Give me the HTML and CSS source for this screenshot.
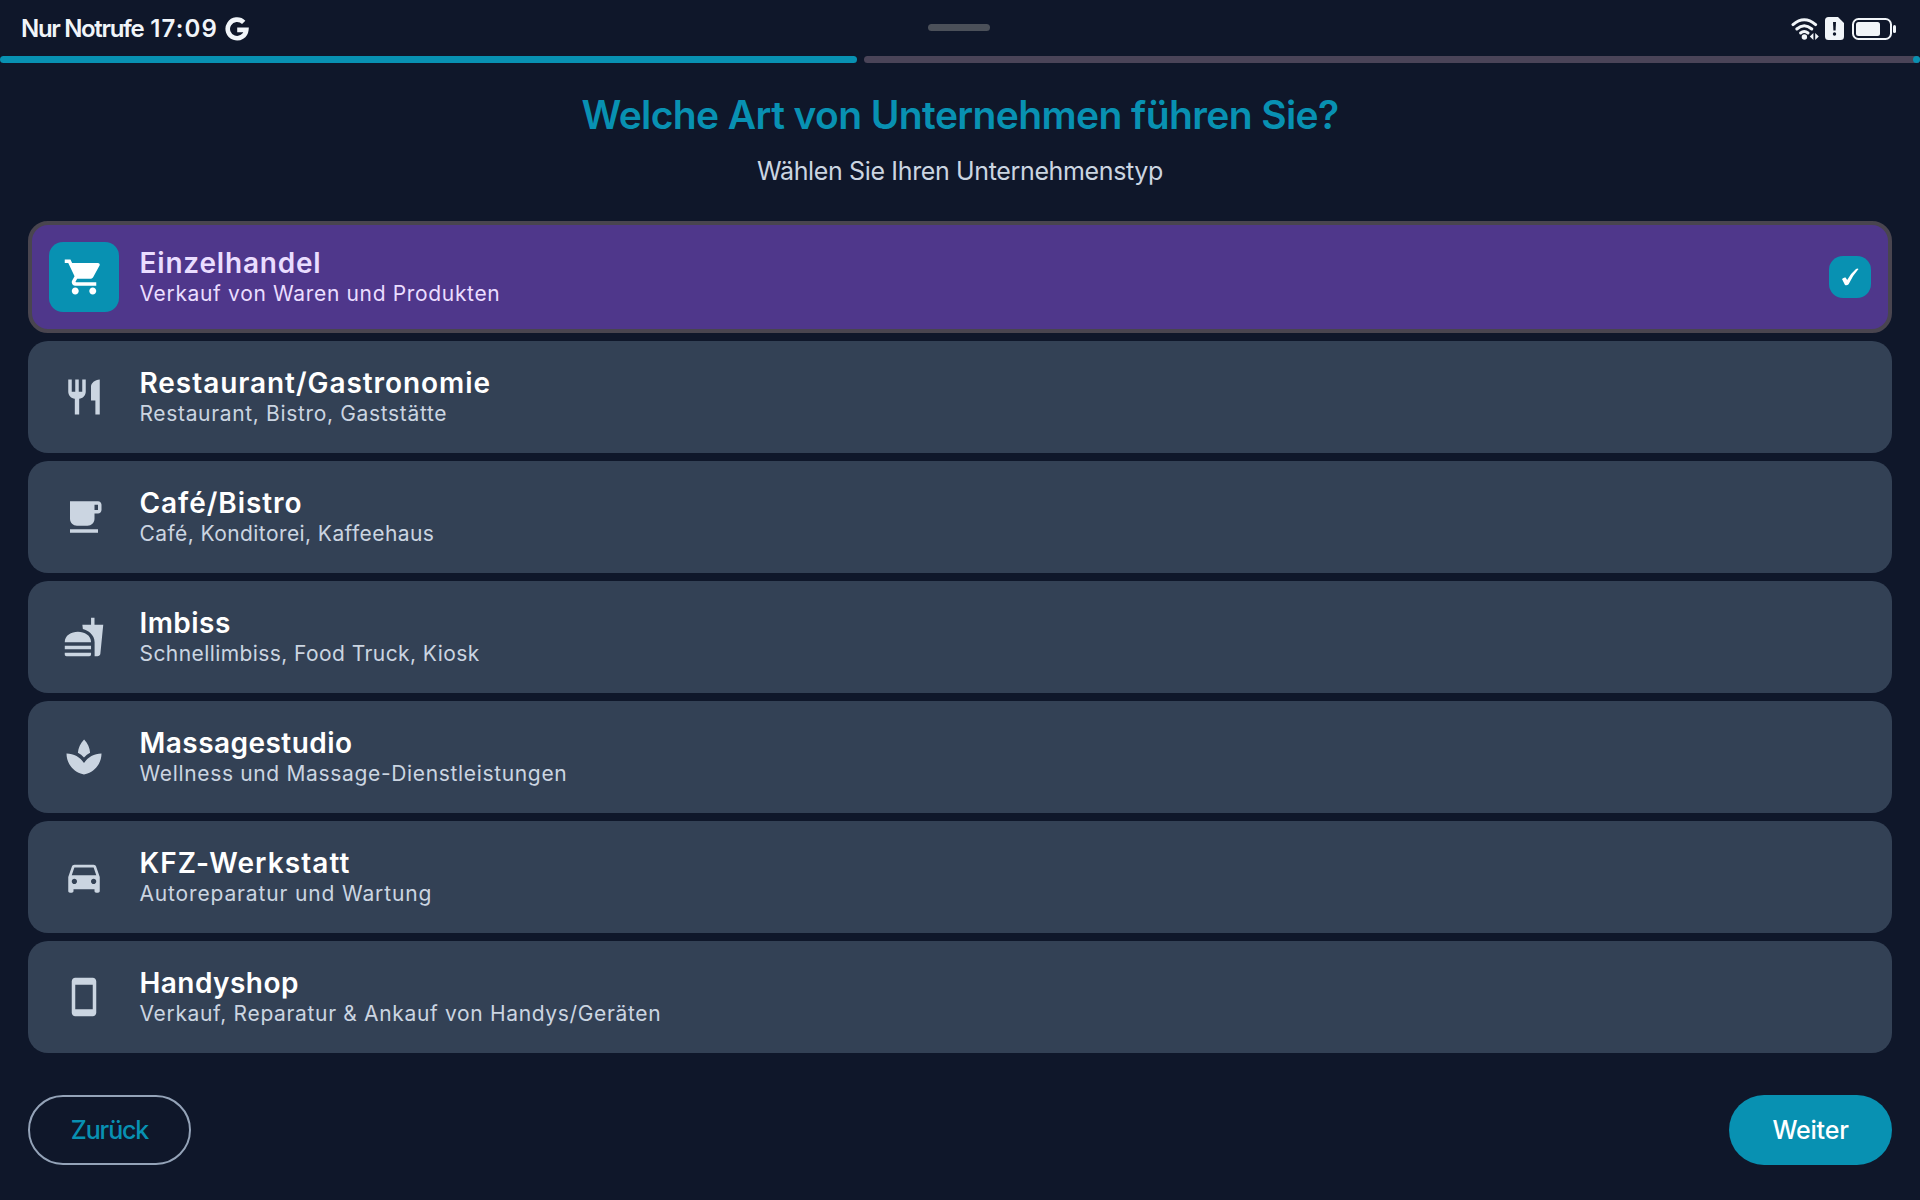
FILE: index.html
```
<!DOCTYPE html>
<html lang="de">
<head>
    <meta charset="UTF-8">
    <title>Unternehmenstyp</title>
    <link rel="stylesheet" href="styles.css">
</head>
<body>
<!-- Status bar -->
<div class="status-bar">
    <div class="status-left">
        <span class="carrier">Nur Notrufe</span>
        <span class="clock">17:09</span>
        <svg class="google-icon" viewBox="0 0 24 24"><path d="M18.7 5.4A9.3 9.3 0 1 0 21.3 12.9H12.2" fill="none" stroke="#f1f5f9" stroke-width="4.6"/></svg>
    </div>
    <div class="handle"></div>
    <div class="status-right">
        <svg class="wifi-icon" viewBox="0 0 28 22">
            <g fill="none" stroke="#f1f5f9" stroke-width="3" stroke-linecap="round">
                <path d="M2 6.6Q13.2-3.2 24.6 6.6"/>
                <path d="M5.8 11Q13.2 4.6 20.8 11"/>
                <path d="M9.6 15Q13.2 12 17 15"/>
            </g>
            <circle cx="13.4" cy="19" r="2.7" fill="#f1f5f9"/>
            <path d="M22.4 15v7l-3.6-3.5zM24.2 15v7l3.6-3.500z" fill="#f1f5f9"/>
        </svg>
        <svg class="sim-icon" viewBox="0 0 19 23">
            <path d="M3.5 0H13l6 6v13.5a3.5 3.5 0 0 1-3.5 3.5h-12A3.5 3.5 0 0 1 0 19.5v-16A3.5 3.5 0 0 1 3.5 0z" fill="#f1f5f9"/>
            <path d="M8 5h3l-.4 8.500H8.4z" fill="#0f172a"/>
            <circle cx="9.5" cy="17" r="1.7" fill="#0f172a"/>
        </svg>
        <svg class="battery-icon" viewBox="0 0 44 22">
            <rect x="1" y="1" width="38" height="20" rx="5.5" fill="none" stroke="#f1f5f9" stroke-width="2"/>
            <rect x="4" y="4" width="24" height="14" rx="2.5" fill="#f1f5f9"/>
            <rect x="41" y="7" width="3" height="8" rx="1.5" fill="#f1f5f9"/>
        </svg>
    </div>
</div>

<!-- Setup progress -->
<div class="progress">
    <div class="progress-done"></div>
    <div class="progress-rest"><span class="progress-stop"></span></div>
</div>

<div class="header">
    <h1 class="title">Welche Art von Unternehmen führen Sie?</h1>
    <p class="subtitle">Wählen Sie Ihren Unternehmenstyp</p>
</div>

<!-- Business types -->
<div class="card-list">
    <div class="card retail selected">
        <div class="card-icon"><svg viewBox="0 0 24 24"><path d="M7 18c-1.1 0-1.99.9-1.99 2S5.9 22 7 22s2-.9 2-2-.9-2-2-2zM1 2v2h2l3.6 7.59-1.35 2.45c-.16.28-.25.61-.25.96 0 1.1.9 2 2 2h12v-2H7.42c-.14 0-.25-.11-.25-.25l.03-.12.9-1.63h7.45c.75 0 1.41-.41 1.75-1.03l3.58-6.49c.08-.14.12-.31.12-.48 0-.55-.45-1-1-1H5.21l-.94-2H1zm16 16c-1.1 0-1.99.9-1.99 2s.89 2 1.99 2 2-.9 2-2-.9-2-2-2z"/></svg></div>
        <div class="card-text">
            <div class="card-name">Einzelhandel</div>
            <div class="card-desc">Verkauf von Waren und Produkten</div>
        </div>
        <div class="check"><svg viewBox="0 0 18 18"><path d="M1 11Q3 9 4.6 9.600L6.200 12.100Q10 5 15 1Q16.600.1 17.500.9Q11.500 7.500 7.600 16.200Q5.900 18 4 17Z" fill="#fff"/></svg></div>
    </div>
    <div class="card restaurant">
        <div class="card-icon"><svg viewBox="0 0 24 24"><path d="M11 9H9V2H7v7H5V2H3v7c0 2.12 1.66 3.84 3.75 3.97V22h2.5v-9.03C11.34 12.84 13 11.12 13 9V2h-2v7zm5-3v8h2.5v8H21V2c-2.76 0-5 2.24-5 4z"/></svg></div>
        <div class="card-text">
            <div class="card-name">Restaurant/Gastronomie</div>
            <div class="card-desc">Restaurant, Bistro, Gaststätte</div>
        </div>
    </div>
    <div class="card cafe">
        <div class="card-icon"><svg viewBox="0 0 24 24"><path d="M20 3H4v10c0 2.21 1.79 4 4 4h6c2.21 0 4-1.79 4-4v-3h2c1.11 0 2-.9 2-2V5c0-1.11-.89-2-2-2zm0 5h-2V5h2v3zM4 19h16v2H4z"/></svg></div>
        <div class="card-text">
            <div class="card-name">Café/Bistro</div>
            <div class="card-desc">Café, Konditorei, Kaffeehaus</div>
        </div>
    </div>
    <div class="card snack">
        <div class="card-icon"><svg viewBox="0 0 24 24"><path d="M18.06 22.99h1.66c.84 0 1.53-.64 1.63-1.46L23 5.05h-5V1h-1.97v4.05h-4.97l.3 2.34c1.71.47 3.31 1.32 4.27 2.26 1.44 1.42 2.43 2.89 2.43 5.29v8.05zM1 21.99V21h15.03v.99c0 .55-.45 1-1.01 1H2.01c-.56 0-1.01-.45-1.01-1zm15.03-7c0-8-15.03-8-15.03 0h15.03zM1.02 17h15v2h-15z"/></svg></div>
        <div class="card-text">
            <div class="card-name">Imbiss</div>
            <div class="card-desc">Schnellimbiss, Food Truck, Kiosk</div>
        </div>
    </div>
    <div class="card massage">
        <div class="card-icon"><svg viewBox="0 0 24 24"><path d="M15.49 9.63c-.18-2.79-1.31-5.51-3.43-7.63-2.14 2.14-3.32 4.86-3.55 7.63 1.28.68 2.46 1.56 3.49 2.63 1.03-1.06 2.21-1.94 3.49-2.63zM12 15.45C9.85 12.17 6.18 10 2 10c0 5.32 3.36 9.82 8.03 11.49.63.23 1.29.4 1.97.51.68-.12 1.33-.29 1.97-.51C18.64 19.82 22 15.32 22 10c-4.18 0-7.85 2.17-10 5.45z"/></svg></div>
        <div class="card-text">
            <div class="card-name">Massagestudio</div>
            <div class="card-desc">Wellness und Massage-Dienstleistungen</div>
        </div>
    </div>
    <div class="card garage">
        <div class="card-icon"><svg viewBox="0 0 24 24"><path d="M18.92 6.01C18.72 5.42 18.16 5 17.5 5h-11c-.66 0-1.21.42-1.42 1.01L3 12v8c0 .55.45 1 1 1h1c.55 0 1-.45 1-1v-1h12v1c0 .55.45 1 1 1h1c.55 0 1-.45 1-1v-8l-2.08-5.99zM6.5 16c-.83 0-1.5-.67-1.5-1.5S5.67 13 6.5 13s1.5.67 1.5 1.5S7.33 16 6.5 16zm11 0c-.83 0-1.5-.67-1.5-1.5s.67-1.5 1.5-1.5 1.5.67 1.5 1.5-.67 1.5-1.5 1.5zM5 11l1.5-4.5h11L19 11H5z"/></svg></div>
        <div class="card-text">
            <div class="card-name">KFZ-Werkstatt</div>
            <div class="card-desc">Autoreparatur und Wartung</div>
        </div>
    </div>
    <div class="card phone">
        <div class="card-icon"><svg viewBox="0 0 24 24"><path d="M17 1.01L7 1c-1.1 0-2 .9-2 2v18c0 1.1.9 2 2 2h10c1.1 0 2-.9 2-2V3c0-1.1-.9-1.99-2-1.99zM17 19H7V5h10v14z"/></svg></div>
        <div class="card-text">
            <div class="card-name">Handyshop</div>
            <div class="card-desc">Verkauf, Reparatur &amp; Ankauf von Handys/Geräten</div>
        </div>
    </div>
</div>

<!-- Navigation -->
<div class="footer">
    <button class="button back-button" type="button">Zurück</button>
    <button class="button next-button" type="button">Weiter</button>
</div>
</body>
</html>
```
FILE: styles.css
```
/* Body styling */
body {
    font-family: Inter, "Noto Sans", sans-serif;
    background-color: #0f172a;
    color: #fff;
    width: 1920px;
    height: 1200px;
    margin: 0;
    overflow: hidden;
}

svg {
    display: block;
}

/* Status bar */
.status-bar {
    display: grid;
    grid-template-columns: 1fr 62px 1fr;
    align-items: center;
    height: 56px;
    padding: 0 24px 0 21px;
    color: #f1f5f9;
    font-size: 24px;
    font-weight: 600;
    box-sizing: border-box;
}

.status-left,
.status-right {
    display: flex;
    align-items: center;
    padding-top: 1px;
}

.status-right {
    justify-content: flex-end;
}

.carrier {
    letter-spacing: -1.33px;
}

.clock {
    margin-left: 7px;
    letter-spacing: 1.1px;
}

.google-icon {
    width: 24px;
    height: 24px;
    margin-left: 7px;
}

.handle {
    height: 7px;
    margin-bottom: 1px;
    border-radius: 4px;
    background-color: #4b5059;
}

.wifi-icon {
    width: 28px;
    height: 22px;
}

.sim-icon {
    width: 19px;
    height: 23px;
    margin: 0 8px 0 6px;
}

.battery-icon {
    width: 44px;
    height: 22px;
}

/* Progress bar */
.progress {
    display: flex;
    gap: 7px;
    height: 7px;
}

.progress-done {
    width: 857px;
    border-radius: 4px;
    background-color: #0891b2;
}

.progress-rest {
    display: flex;
    flex: 1;
    justify-content: flex-end;
    border-radius: 4px;
    background-color: #4a4458;
}

.progress-stop {
    width: 7px;
    border-radius: 50%;
    background-color: #0891b2;
}

/* Header */
.header {
    height: 158px;
    padding-top: 26px;
    text-align: center;
    box-sizing: border-box;
}

.title {
    margin: 0;
    color: #0891b2;
    font-size: 39px;
    font-weight: 600;
    line-height: 52px;
    letter-spacing: -0.6px;
}

.subtitle {
    margin: 12px 0 0;
    color: #cbd5e1;
    font-size: 25px;
    line-height: 36px;
    letter-spacing: -0.36px;
}

/* Cards */
.card-list {
    display: flex;
    flex-direction: column;
    gap: 8px;
    padding: 0 28px;
}

.card {
    display: flex;
    align-items: center;
    height: 112px;
    padding: 0 21px;
    border-radius: 20px;
    background-color: #334155;
    box-sizing: border-box;
}

.card-icon {
    display: flex;
    align-items: center;
    justify-content: center;
    width: 70px;
    height: 70px;
    border-radius: 14px;
    fill: #cbd5e1;
}

.card-icon svg {
    width: 42px;
    height: 42px;
}

.card-text {
    flex: 1;
    margin-left: 20.5px;
    padding-bottom: 1px;
    white-space: nowrap;
}

.card-name {
    font-size: 28px;
    font-weight: 600;
    line-height: 34px;
    letter-spacing: 0.8px;
}

.card-desc {
    color: #cbd5e1;
    font-size: 21px;
    line-height: 28px;
    letter-spacing: 0.66px;
}

/* Text spacing per card */
.restaurant .card-name,
.cafe .card-name {
    letter-spacing: 0.94px;
}

.snack .card-name,
.massage .card-name,
.phone .card-name {
    letter-spacing: 0.45px;
}

.garage .card-name {
    letter-spacing: 1.07px;
}

.cafe .card-desc,
.snack .card-desc {
    letter-spacing: 0.42px;
}

.garage .card-desc {
    letter-spacing: 0.85px;
}

/* Selected card */
.selected {
    padding: 0 17px;
    border: 4px solid #49454f;
    background-color: #4f378b;
}

.selected .card-icon {
    background-color: #0891b2;
    fill: #fff;
}

.selected .card-name,
.selected .card-desc {
    color: #eaddff;
}

.check {
    display: flex;
    align-items: center;
    justify-content: center;
    width: 42px;
    height: 42px;
    border-radius: 14px;
    background-color: #0891b2;
}

.check svg {
    width: 18px;
    height: 18px;
}

/* Buttons */
.footer {
    display: flex;
    justify-content: space-between;
    padding: 42px 28px 0;
}

.button {
    width: 163px;
    height: 70px;
    padding: 0;
    border: none;
    border-radius: 35px;
    font-family: inherit;
    font-size: 25px;
    font-weight: 500;
}

.back-button {
    border: 2px solid #94a3b8;
    background-color: transparent;
    color: #0891b2;
    letter-spacing: -1.15px;
}

.next-button {
    background-color: #0891b2;
    color: #fff;
    letter-spacing: -0.2px;
}
```
